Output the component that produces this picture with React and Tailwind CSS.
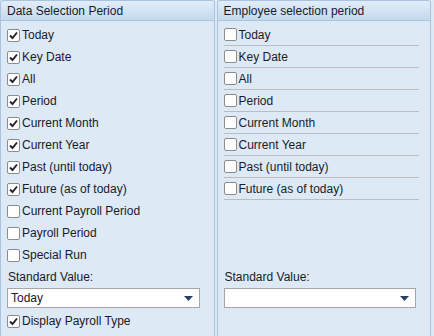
const LEFT = [
  { label: 'Today', checked: true },
  { label: 'Key Date', checked: true },
  { label: 'All', checked: true },
  { label: 'Period', checked: true },
  { label: 'Current Month', checked: true },
  { label: 'Current Year', checked: true },
  { label: 'Past (until today)', checked: true },
  { label: 'Future (as of today)', checked: true },
  { label: 'Current Payroll Period', checked: false },
  { label: 'Payroll Period', checked: false },
  { label: 'Special Run', checked: false },
]

const RIGHT = LEFT.slice(0, 8).map(r => ({ ...r, checked: false }))

function Box({ checked }) {
  return (
    <div className="w-[13px] h-[13px] shrink-0 bg-white border border-[#8c8c8c] rounded-[2px] flex items-center justify-center">
      {checked && (
        <svg width="9" height="9" viewBox="0 0 9 9">
          <path d="M1 4.5 L3.5 7 L8 1.5" fill="none" stroke="#22222e" strokeWidth="1.9" />
        </svg>
      )}
    </div>
  )
}

function Row({ label, checked, line }) {
  return (
    <div className={`h-[22px] flex items-center gap-[2px] ${line ? 'border-b border-[#bdbdbd] mr-[11px]' : ''}`}>
      <Box checked={checked} />
      <span>{label}</span>
    </div>
  )
}

function Select({ value }) {
  return (
    <div className="h-[20px] mr-[14px] bg-white border border-[#a6a6a6] flex items-center justify-between pl-[3px] pr-[6px]">
      <span>{value}</span>
      <svg width="9" height="5" viewBox="0 0 9 5"><path d="M0 0 H9 L4.5 5 Z" fill="#2b3f66" /></svg>
    </div>
  )
}

function Panel({ title, rows, line, value, extra }) {
  return (
    <div className="flex-1 flex flex-col border-x border-[#a9c3de] rounded-t-[3px]">
      <div className="h-[21px] flex items-center px-[6px] bg-gradient-to-b from-[#e2edf8] to-[#c4d9ee] border-b border-t border-[#a9c3de] rounded-t-[3px]">
        {title}
      </div>
      <div className="flex flex-col pl-[6px] pt-[3px]">
        {rows.map(r => <Row key={r.label} {...r} line={line} />)}
        {line && <div className="h-[66px]" />}
        <div className="h-[22px] flex items-center pl-[1px]">Standard Value:</div>
        <Select value={value} />
        {extra && <div className="mt-[2px]"><Row label="Display Payroll Type" checked /></div>}
      </div>
    </div>
  )
}

export default function App() {
  return (
    <div className="w-[434px] h-[336px] overflow-hidden bg-[#dde9f5] flex gap-[2px] pr-[3px] text-[12px] text-[#1a1a2a]" style={{ fontFamily: '"Liberation Sans", Arial, sans-serif' }}>
      <Panel title="Data Selection Period" rows={LEFT} value="Today" extra />
      <Panel title="Employee selection period" rows={RIGHT} line value="" />
    </div>
  )
}
